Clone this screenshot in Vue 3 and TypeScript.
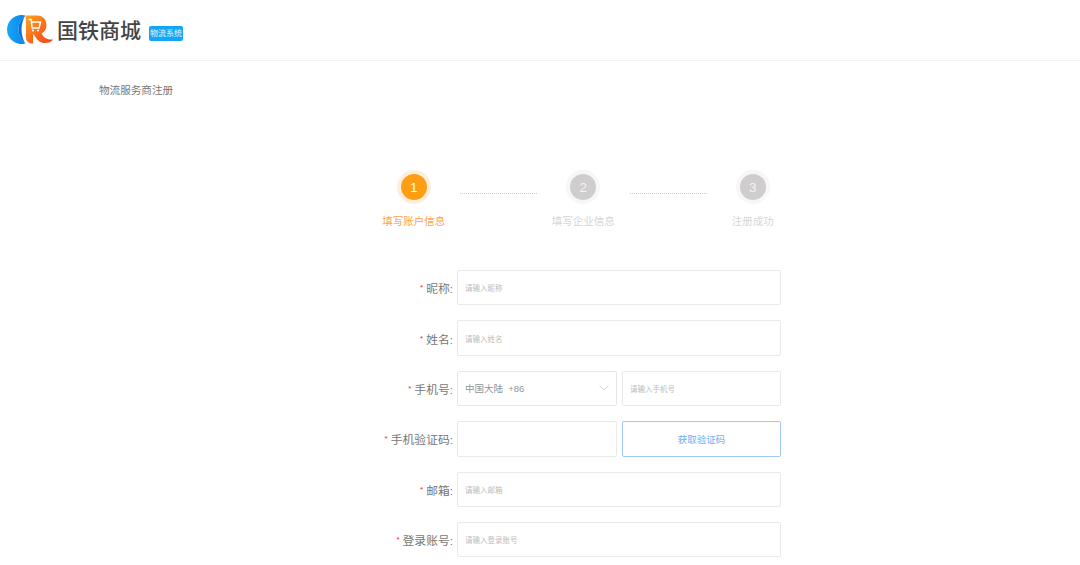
<script setup lang="ts">
interface Step { n: number; label: string; active: boolean }
const steps: Step[] = [
  { n: 1, label: '填写账户信息', active: true },
  { n: 2, label: '填写企业信息', active: false },
  { n: 3, label: '注册成功', active: false },
]
</script>

<template>
  <div class="page">
    <header class="header">
      <svg class="logo" width="46" height="30" viewBox="0 0 46 30">
        <defs>
          <linearGradient id="cg" x1="0" y1="0" x2="1" y2="0">
            <stop offset="0" stop-color="#16a6f7" />
            <stop offset="1" stop-color="#0c84ea" />
          </linearGradient>
          <linearGradient id="rg" x1="0" y1="0" x2="1" y2="1">
            <stop offset="0" stop-color="#ffa21c" />
            <stop offset="0.55" stop-color="#fb6a1c" />
            <stop offset="1" stop-color="#f2401f" />
          </linearGradient>
        </defs>
        <path d="M18.3 0.5 A14.5 14.5 0 1 0 18.3 28.5 C14 24.5 11.5 20 11.5 14.5 C11.5 9 14 4.5 18.3 0.5Z" fill="url(#cg)" />
        <path d="M18.3 0.5 C14 4.5 11.5 9 11.5 14.5 C11.5 20 14 24.5 18.3 28.5 C16 24.5 14.5 20 14.5 14.5 C14.5 9 16 4.5 18.3 0.5Z" fill="#0a6fd6" />
        <path d="M18.5 0.5 H30 C36.5 0.5 39.5 5 39.5 10 C39.5 14 37.5 17 34.5 18.5 C36.5 22.5 40 25 46 24.5 C44 28 37 29.5 32.5 26.5 C29.5 24.5 28 21.5 27 19.5 H26 V28.5 C22 28.5 19 26.5 19 23 V7 C19 4.5 18.5 2.5 18.5 0.5Z" fill="url(#rg)" />
        <path d="M21.5 4.5 H24 L25.2 13 H32 L33.5 7 H24.6" fill="none" stroke="#fff" stroke-width="1.5" />
        <circle cx="26" cy="15.5" r="1.1" fill="#fff" />
        <circle cx="31" cy="15.5" r="1.1" fill="#fff" />
      </svg>
      <span class="brand">国铁商城</span>
      <span class="tag">物流系统</span>
    </header>

    <div class="page-title">物流服务商注册</div>

    <div class="steps">
      <template v-for="(s, i) in steps" :key="s.n">
        <div class="line" v-if="i > 0"></div>
        <div class="step" :class="{ active: s.active }">
          <div class="dot"><span>{{ s.n }}</span></div>
          <div class="step-label">{{ s.label }}</div>
        </div>
      </template>
    </div>

    <form class="form">
      <div class="row">
        <label class="lbl"><i>*</i>昵称:</label>
        <div class="box ph">请输入昵称</div>
      </div>
      <div class="row">
        <label class="lbl"><i>*</i>姓名:</label>
        <div class="box ph">请输入姓名</div>
      </div>
      <div class="row">
        <label class="lbl"><i>*</i>手机号:</label>
        <div class="split">
          <div class="box select">
            <span>中国大陆&nbsp;&nbsp;+86</span>
            <svg width="10" height="6" viewBox="0 0 10 6"><path d="M0.5 0.5 L5 5.2 L9.5 0.5" fill="none" stroke="#d3dce6" stroke-width="1" /></svg>
          </div>
          <div class="box ph">请输入手机号</div>
        </div>
      </div>
      <div class="row">
        <label class="lbl"><i>*</i>手机验证码:</label>
        <div class="split">
          <div class="box"></div>
          <div class="box code">获取验证码</div>
        </div>
      </div>
      <div class="row">
        <label class="lbl"><i>*</i>邮箱:</label>
        <div class="box ph">请输入邮箱</div>
      </div>
      <div class="row">
        <label class="lbl"><i>*</i>登录账号:</label>
        <div class="box ph">请输入登录账号</div>
      </div>
    </form>
  </div>
</template>

<style>
html, body { margin: 0; background: #fff; overflow: hidden; }
</style>

<style scoped>
.page {
  width: 1080px;
  height: 565px;
  overflow: hidden;
  background: #fff;
  font-family: "Liberation Sans", "Noto Sans CJK SC", sans-serif;
}
.header {
  height: 61px;
  box-sizing: border-box;
  border-bottom: 1px solid #f2f2f2;
  display: flex;
  align-items: center;
  padding: 0 0 0 7px;
}
.logo { flex: none; }
.brand {
  margin-left: 4px;
  font-size: 21px;
  font-weight: 500;
  color: #444;
  position: relative;
  top: -1px;
}
.tag {
  margin-left: 8px;
  margin-top: 7px;
  width: 34px;
  height: 15px;
  line-height: 15px;
  border-radius: 2px;
  background: #14a5f5;
  color: #e8f6ff;
  font-size: 8px;
  text-align: center;
}
.page-title {
  margin: 22px 0 0 99px;
  font-size: 10.6px;
  line-height: 14px;
  color: #777;
}
.steps {
  margin: 73px 0 0 367.5px;
  display: flex;
  align-items: flex-start;
}
.step {
  width: 92.5px;
  display: flex;
  flex-direction: column;
  align-items: center;
}
.line {
  width: 77px;
  margin-top: 23px;
  border-top: 1px dotted #ccc;
}
.dot {
  width: 26px;
  height: 26px;
  border-radius: 50%;
  background: #cfcdcd;
  border: 4px solid #f8f7f7;
  color: #f4f4f4;
  font-size: 13.5px;
  display: flex;
  align-items: center;
  justify-content: center;
}
.step.active .dot {
  background: #ff9d14;
  border-color: #fdeedd;
  color: #fff;
}
.step-label {
  margin-top: 10px;
  font-size: 10.5px;
  line-height: 14px;
  color: #d6d6d6;
  white-space: nowrap;
}
.step.active .step-label { color: #ffa347; }
.form {
  margin: 42px 0 0 0;
  display: flex;
  flex-direction: column;
  gap: 15px;
}
.row {
  display: flex;
  height: 35.4px;
  align-items: stretch;
}
.lbl {
  width: 453px;
  flex: none;
  display: flex;
  align-items: center;
  justify-content: flex-end;
  font-size: 11.8px;
  color: #777;
}
.lbl i {
  color: #f5222d;
  font-style: normal;
  font-size: 8px;
  margin-right: 3px;
}
.row > .box, .split { margin-left: 4px; width: 324px; }
.box {
  box-sizing: border-box;
  border: 1px solid #e9e9e9;
  border-radius: 2px;
  display: flex;
  align-items: center;
  background: #fff;
}
.ph {
  padding-left: 7px;
  font-size: 7.5px;
  color: #bcbcbc;
}
.split {
  display: grid;
  grid-template-columns: 160px 159px;
  gap: 5px;
}
.select {
  justify-content: space-between;
  padding: 0 7px;
  font-size: 9.5px;
  color: #8f949c;
  border-color: #e4e8ee;
}
.code {
  justify-content: center;
  border-color: #9cc8fa;
  color: #6aaef8;
  font-size: 9.5px;
}
</style>
